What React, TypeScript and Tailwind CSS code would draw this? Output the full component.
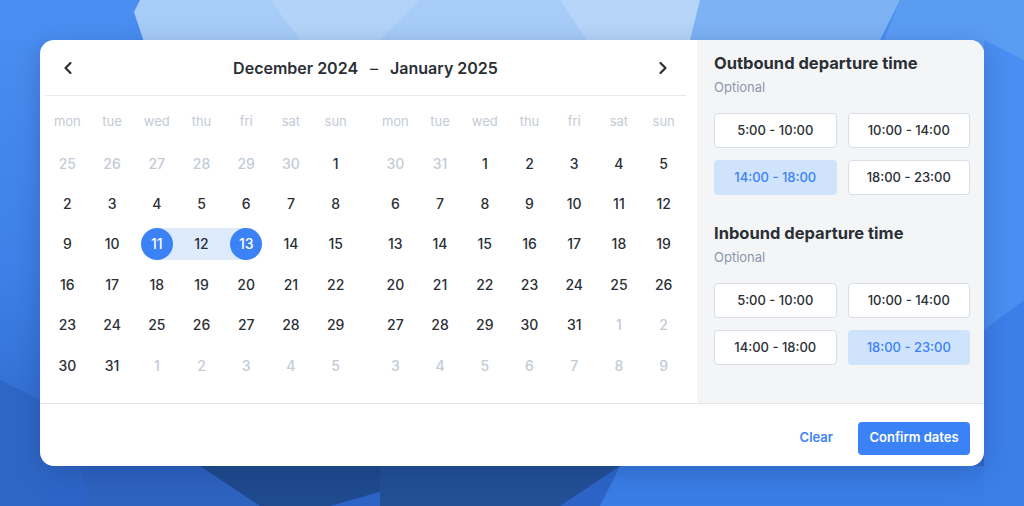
import { ChevronLeft, ChevronRight } from 'lucide-react';

type Day = { n: number; muted?: boolean };

const DAY_NAMES = ['mon', 'tue', 'wed', 'thu', 'fri', 'sat', 'sun'];

function buildMonth(prevTail: number[], days: number, nextHead: number): Day[][] {
  const cells: Day[] = [
    ...prevTail.map((n) => ({ n, muted: true })),
    ...Array.from({ length: days }, (_, i) => ({ n: i + 1 })),
    ...Array.from({ length: nextHead }, (_, i) => ({ n: i + 1, muted: true })),
  ];
  const rows: Day[][] = [];
  for (let i = 0; i < cells.length; i += 7) rows.push(cells.slice(i, i + 7));
  return rows;
}

const DEC = buildMonth([25, 26, 27, 28, 29, 30], 31, 5);
const JAN = buildMonth([30, 31], 31, 9);

function Month({ rows, selected }: { rows: Day[][]; selected?: boolean }) {
  return (
    <div className="w-[313px]">
      <div className="grid grid-cols-7 pt-[14px] pb-[9px]">
        {DAY_NAMES.map((d) => (
          <div key={d} className="h-6 flex items-center justify-center text-[13px] text-[#c3cbd6]">
            {d}
          </div>
        ))}
      </div>
      {rows.map((row, ri) => (
        <div key={ri} className="grid grid-cols-7 h-[40.4px]">
          {row.map((d, ci) => {
            const inMonth = !d.muted;
            const isStart = selected && inMonth && d.n === 11;
            const isEnd = selected && inMonth && d.n === 13;
            const isMid = selected && inMonth && d.n === 12;
            return (
              <div key={ci} className="relative flex items-center justify-center">
                {isStart && <div className="absolute left-1/2 right-0 h-8 bg-[#deebfc]" />}
                {isEnd && <div className="absolute left-0 right-1/2 h-8 bg-[#deebfc]" />}
                {isMid && <div className="absolute inset-x-0 h-8 bg-[#deebfc]" />}
                <div
                  className={`relative z-10 w-8 h-8 rounded-full flex items-center justify-center text-[14px] font-medium ${
                    isStart || isEnd
                      ? 'bg-[#3b82f6] text-white'
                      : d.muted
                      ? 'text-[#c3cbd6]'
                      : 'text-[#2b2f36]'
                  }`}
                >
                  {d.n}
                </div>
              </div>
            );
          })}
        </div>
      ))}
    </div>
  );
}

function Slots({ title, active }: { title: string; active: number }) {
  const slots = ['5:00 - 10:00', '10:00 - 14:00', '14:00 - 18:00', '18:00 - 23:00'];
  return (
    <div>
      <div className="h-[22px] flex items-center text-[16.5px] font-bold text-[#2b2f36]">{title}</div>
      <div className="mt-[5px] h-[18px] flex items-center text-[13px] text-[#8c97aa]">Optional</div>
      <div className="mt-[16px] grid grid-cols-2 gap-x-[11px] gap-y-[12px]">
        {slots.map((s, i) => (
          <button
            key={s}
            className={`h-[35px] rounded-[4px] text-[13px] font-medium flex items-center justify-center ${
              i === active
                ? 'bg-[#cfe3fc] text-[#3b82f6]'
                : 'bg-white border border-[#d9dee6] text-[#2b2f36]'
            }`}
          >
            {s}
          </button>
        ))}
      </div>
    </div>
  );
}

function Background() {
  return (
    <svg className="absolute inset-0 w-full h-full" viewBox="0 0 1024 506" preserveAspectRatio="none">
      <defs>
        <linearGradient id="bg" x1="0" y1="0" x2="0" y2="1">
          <stop offset="0" stopColor="#4b8ff2" />
          <stop offset="0.55" stopColor="#3d7fe6" />
          <stop offset="1" stopColor="#2c63c4" />
        </linearGradient>
      </defs>
      <rect width="1024" height="506" fill="url(#bg)" />
      <polygon points="130,0 700,0 660,60 150,60" fill="#a7ccf7" />
      <polygon points="560,0 700,0 720,40 600,60" fill="#b6d5f8" />
      <polygon points="270,0 420,0 380,40 300,40" fill="#c0dbf9" opacity="0.5" />
      <polygon points="700,0 900,0 870,60 690,40" fill="#7db2f4" />
      <polygon points="900,0 1024,0 1024,60 880,50" fill="#5b9cf3" />
      <polygon points="0,0 140,0 120,40 0,40" fill="#4a8ef2" />
      <polygon points="0,380 40,400 40,506 0,506" fill="#2f66c6" />
      <polygon points="80,466 230,466 300,506 90,506" fill="#2e63c0" />
      <polygon points="200,466 470,466 330,506 260,506" fill="#1f4a8d" />
      <polygon points="380,466 620,466 560,506 380,506" fill="#234f96" />
      <polygon points="620,466 984,466 1024,506 600,506" fill="#3a7de6" />
      <polygon points="984,300 1024,260 1024,506 984,506" fill="#3c7fe8" />
      <polygon points="984,40 1024,60 1024,300 984,330" fill="#4a8ef2" />
    </svg>
  );
}

export default function App() {
  return (
    <div className="relative w-[1024px] h-[506px] overflow-hidden font-['Inter',sans-serif]">
      <Background />
      <div className="relative pt-[40px] pl-[40px]">
        <div className="w-[944px] h-[426px] bg-white rounded-[14px] overflow-hidden flex flex-col shadow-[0_6px_24px_rgba(15,40,90,0.25)]">
          <div className="flex h-[363px]">
            {/* calendars */}
            <div className="w-[657px] pl-[5px] pr-[11px]">
              <div className="h-[56px] flex items-center justify-between border-b border-[#e6e9ee] px-[13px]">
                <ChevronLeft size={20} strokeWidth={2.6} className="text-[#2b2f36]" />
                <div className="flex items-center gap-[12px] text-[16px] font-semibold text-[#2b2f36]">
                  <span>December 2024</span>
                  <span className="font-normal">–</span>
                  <span>January 2025</span>
                </div>
                <ChevronRight size={20} strokeWidth={2.6} className="text-[#2b2f36]" />
              </div>
              <div className="flex gap-[15px]">
                <Month rows={DEC} selected />
                <Month rows={JAN} />
              </div>
            </div>
            {/* times */}
            <div className="flex-1 bg-[#f4f5f7] pl-[17px] pr-[14px] pt-[12px]">
              <Slots title="Outbound departure time" active={2} />
              <div className="mt-[27px]">
                <Slots title="Inbound departure time" active={3} />
              </div>
            </div>
          </div>
          <div className="flex-1 border-t border-[#e3e6eb] flex items-center justify-end gap-[25px] pr-[14px] pt-[6px]">
            <button className="text-[13px] font-semibold text-[#3b82f6]">Clear</button>
            <button className="h-[33px] w-[112px] rounded-[4px] bg-[#3b82f6] text-white text-[13px] font-semibold">
              Confirm dates
            </button>
          </div>
        </div>
      </div>
    </div>
  );
}
